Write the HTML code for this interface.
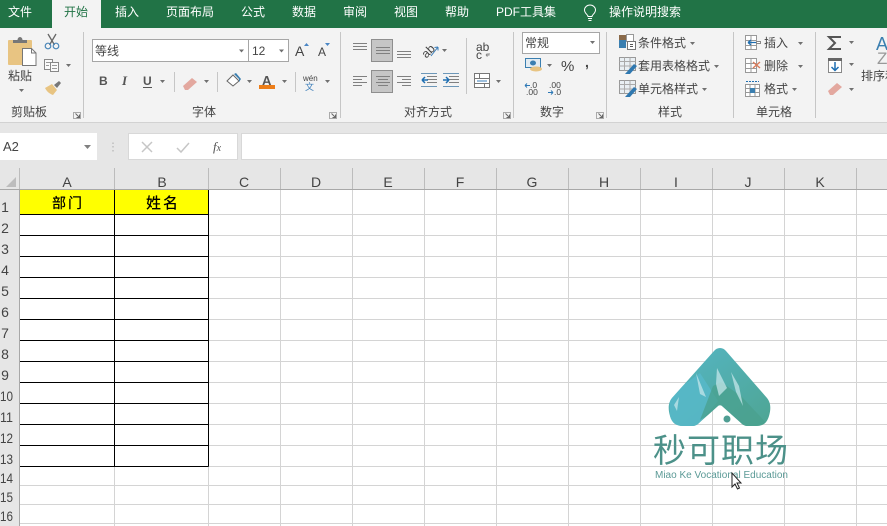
<!DOCTYPE html>
<html lang="zh"><head><meta charset="utf-8"><title>Excel</title>
<style>
html,body{margin:0;padding:0;background:#fff;width:887px;height:526px;overflow:hidden}
svg{display:block}
text{font-family:"Liberation Sans","Noto Sans CJK SC",sans-serif;fill:#444;font-size:12px}
.t{fill:#fff;font-size:12px}
.ch{fill:#444;font-size:14px;text-anchor:middle}
.rh{fill:#444;font-size:14px;text-anchor:middle}
.l{stroke:#808080;stroke-width:1;fill:none}
.a{fill:#707070}
</style></head><body>
<svg width="887" height="526" viewBox="0 0 887 526" xmlns="http://www.w3.org/2000/svg">
<rect width="887" height="526" fill="#fff"/>
<!-- tabs -->
<rect width="887" height="28" fill="#217346"/>
<rect x="52" y="0" width="49" height="28" fill="#f3f3f3"/>
<text class="t" x="8" y="16">文件</text>
<text x="64" y="16" style="fill:#217346">开始</text>
<text class="t" x="115" y="16">插入</text>
<text class="t" x="166" y="16">页面布局</text>
<text class="t" x="241" y="16">公式</text>
<text class="t" x="292" y="16">数据</text>
<text class="t" x="343" y="16">审阅</text>
<text class="t" x="394" y="16">视图</text>
<text class="t" x="445" y="16">帮助</text>
<text class="t" x="496" y="16">PDF工具集</text>
<path d="M588 16.500c0-2-3.500-3-3.500-6.500a5.500 5 0 0 1 11 0c0 3.500-3.500 4.500-3.500 6.500zM588 18.500h4M588.500 20.500h3" fill="none" stroke="#fff" stroke-width="1"/>
<text class="t" x="609" y="16">操作说明搜索</text>
<!-- ribbon -->
<rect y="28" width="887" height="94" fill="#f3f3f3"/>
<rect y="122" width="887" height="1" fill="#d2d2d2"/>
<g fill="#c6c6c6">
<rect x="83" y="32" width="1" height="86"/><rect x="340" y="32" width="1" height="86"/><rect x="513" y="32" width="1" height="86"/><rect x="606" y="32" width="1" height="86"/><rect x="733" y="32" width="1" height="86"/><rect x="815" y="32" width="1" height="86"/>
<rect x="174" y="72" width="1" height="20"/><rect x="217" y="72" width="1" height="20"/><rect x="295" y="72" width="1" height="20"/><rect x="466" y="38" width="1" height="56"/>
</g>
<!-- clipboard -->
<rect x="8" y="40" width="24" height="25" rx="1" fill="#e8c482"/>
<path d="M13 43v-3h4.500a2.500 3 0 0 1 5 0H27v3z" fill="#777"/>
<path d="M22.500 48.500h9l4.500 4.500v12.500H22.500z" fill="#fff" stroke="#777"/>
<path d="M31.500 48.500v4.500h4.500" fill="none" stroke="#777"/>
<text x="8" y="80">粘贴</text>
<path class="a" d="M19 89h5l-2.500 3z"/>
<path d="M48 34l6.500 11M56 34l-6.500 11" stroke="#666" stroke-width="1.300" fill="none"/>
<circle cx="48" cy="46" r="2.800" fill="none" stroke="#4a86b8" stroke-width="1.200"/><circle cx="56" cy="46" r="2.800" fill="none" stroke="#4a86b8" stroke-width="1.200"/>
<path d="M44.500 59.500h8v10h-8z" fill="#fafafa" stroke="#888"/><path d="M50.500 62.500h8v9h-8z" fill="#fafafa" stroke="#888"/>
<path d="M46 62.500h4M46 65.500h3M52 65.500h5M52 68.500h5" stroke="#999"/>
<path class="a" d="M66 64h5l-2.500 3z"/>
<path d="M45 88l7-4 5 6-4 5c-3-1-6-3-8-7z" fill="#e8c482"/><path d="M54 85l5-4 2 2-4 5z" fill="#777"/>
<text x="11" y="116">剪贴板</text>
<g id="launcher"><path d="M73.500 112.500h7v6h-7z" fill="none" stroke="#aaa"/><path d="M75.500 113.500l3.500 3.500M79.500 114.500v3h-3" fill="none" stroke="#666"/></g>
<!-- font -->
<rect x="92.500" y="39.500" width="156" height="22" fill="#fff" stroke="#a6a6a6"/>
<rect x="248.500" y="39.500" width="40" height="22" fill="#fff" stroke="#a6a6a6"/>
<text x="95" y="55">等线</text>
<path class="a" d="M239 49.500h5l-2.500 3zM279 49.500h5l-2.500 3z"/>
<text x="252" y="55">12</text>
<text x="295" y="56" style="font-size:14px">A</text><path d="M304 46l2.500-3 2.500 3z" fill="#4a86c5"/>
<text x="318" y="56" style="font-size:12px">A</text><path d="M325 43l2.500 3 2.500-3z" fill="#4a86c5"/>
<text x="99" y="85" style="font-weight:bold;font-size:12px;fill:#555">B</text>
<text x="122" y="85" style="font-family:'Liberation Serif',serif;font-style:italic;font-size:13px;font-weight:bold;fill:#555">I</text>
<text x="143" y="85" style="font-weight:bold;fill:#555">U</text><rect x="143" y="87" width="9" height="1" fill="#555"/>
<path class="a" d="M160 80h5l-2.500 3zM204 80h5l-2.500 3zM247 80h5l-2.500 3zM282 80h5l-2.500 3zM325 80h5l-2.500 3z"/>
<path d="M183 86l9-8 5 4-9 8h-3z" fill="#e3a89f"/>
<path d="M227 81l6-6 6 6-6 5z" fill="#fff" stroke="#666"/><path d="M234 74l5 5v3l2-3-5-6z" fill="#3b7fb0"/>
<text x="262" y="85" style="font-size:13px;font-weight:bold;fill:#555">A</text><rect x="259" y="85" width="16" height="4" fill="#ec7d18"/>
<text x="303" y="81" style="font-size:8px">wén</text><text x="305" y="90" style="font-size:9px;fill:#3a7cb8">文</text>
<text x="204" y="116" text-anchor="middle">字体</text>
<use href="#launcher" x="256"/>
<!-- alignment -->
<rect x="371.500" y="39.500" width="21" height="22" fill="#c6c6c6" stroke="#8e8e8e"/>
<rect x="371.500" y="70.500" width="21" height="22" fill="#c6c6c6" stroke="#8e8e8e"/>
<path class="l" d="M353 43.500h14M353 46.500h14M353 49.500h14M376 47.500h14M376 50.500h14M376 53.500h14M397 51.500h14M397 54.500h14M397 57.500h14"/>
<path class="l" d="M353 76.500h14M353 79.500h9M353 82.500h14M353 85.500h9M376 76.500h14M378 79.500h10M376 82.500h14M378 85.500h10M397 76.500h14M402 79.500h9M397 82.500h14M402 85.500h9"/>
<text x="421" y="56" transform="rotate(-45 427 51)" style="font-size:12px">ab</text>
<path d="M431 56l7-9M438 47l-3.500 .5M438 47l0 3.500" stroke="#3a7cb8" fill="none"/>
<path class="a" d="M442 49h5l-2.500 3z"/>
<path class="l" d="M427 76.500h10M427 79.500h10M427 82.500h10M443 76.500h0M449 76.500h10M449 79.500h10M449 82.500h10"/>
<path d="M421 73.500h16M421 86.500h16M443 73.500h16M443 86.500h16" stroke="#6d97b8" fill="none"/>
<path d="M428 80h-6m0 0l3-3m-3 3l3 3M443 80h6m0 0l-3-3m3 3l-3 3" stroke="#1f6fb2" stroke-width="1.500" fill="none"/>
<text x="476" y="51" style="font-size:12px">ab</text><text x="476" y="59" style="font-size:12px">c</text><path d="M489 53v2h-3m0 0l1.500-1.500m-1.500 1.500l1.500 1.500" stroke="#888" fill="none"/>
<path d="M474.500 73.500h15v14h-15zM474.500 78.500h15M474.500 83.500h15M479.500 73.500v5M484.500 83.500v4" fill="#fff" stroke="#777"/>
<path d="M477 81h10" stroke="#3a7cb8"/>
<path class="a" d="M496 80h5l-2.500 3z"/>
<text x="428" y="116" text-anchor="middle">对齐方式</text>
<use href="#launcher" x="430"/>
<!-- number -->
<rect x="522.500" y="32.500" width="77" height="21" fill="#fff" stroke="#a6a6a6"/>
<text x="525" y="47">常规</text>
<path class="a" d="M590 41h5l-2.500 3z"/>
<rect x="525.500" y="58.500" width="15" height="9" fill="#e3ecf2" stroke="#3b7fb0"/><ellipse cx="533" cy="63" rx="3" ry="2.500" fill="#3b7fb0"/><ellipse cx="536" cy="69" rx="6" ry="2.500" fill="#e8c482"/>
<path class="a" d="M547 64h5l-2.500 3z"/>
<text x="561" y="71" style="font-size:15px">%</text>
<text x="585" y="67" style="font-size:14px;font-weight:bold">,</text>
<text x="530" y="88" style="font-size:8.500px">.0</text><text x="526" y="95" style="font-size:8.500px">.00</text><path d="M530 85.500h-5m0 0l2-2m-2 2l2 2" stroke="#2d78b5" fill="none"/>
<text x="549" y="88" style="font-size:8.500px">.00</text><text x="554" y="95" style="font-size:8.500px">.0</text><path d="M548 92.500h5m0 0l-2-2m2 2l-2 2" stroke="#2d78b5" fill="none"/>
<text x="552" y="116" text-anchor="middle">数字</text>
<use href="#launcher" x="523"/>
<!-- styles -->
<rect x="619" y="35" width="7" height="5" fill="#8a6a4a"/><rect x="619" y="40" width="7" height="8" fill="#3b7fb0"/><rect x="626.500" y="34.500" width="7" height="7" fill="#fff" stroke="#999"/><rect x="627.500" y="41.500" width="8" height="8" fill="#fff" stroke="#777"/><path d="M630 44.500h3M630 46.500h3" stroke="#555"/>
<text x="638" y="47">条件格式</text><path class="a" d="M690 42h5l-2.500 3z"/>
<g id="tb"><rect x="619.500" y="57.500" width="16" height="13" fill="#e9eff3" stroke="#999"/><path d="M624.500 57.500v13M630 57.500v13M619.500 61.500h16M619.500 66h16" stroke="#aaa" fill="none"/><path d="M625 74l9-10 3 2-7 8z" fill="#2f78b0"/></g>
<text x="638" y="70">套用表格格式</text><path class="a" d="M714 65h5l-2.500 3z"/>
<use href="#tb" y="23"/>
<text x="638" y="93">单元格样式</text><path class="a" d="M702 88h5l-2.500 3z"/>
<text x="670" y="116" text-anchor="middle">样式</text>
<!-- cells -->
<path d="M745.500 35.500h11v14h-11zM745.500 40.500h11M745.500 45.500h11M751 35.500v14" fill="#fff" stroke="#999"/><path d="M757 42.500h-9m0 0l3-2.500m-3 2.500l3 2.500" stroke="#1f6fb2" stroke-width="1.300" fill="none"/><rect x="756.500" y="41.500" width="4" height="2" fill="#fff" stroke="#888"/>
<text x="764" y="47">插入</text><path class="a" d="M798 42h5l-2.500 3z"/>
<path d="M745.500 58.500h11v14h-11zM745.500 63.500h11M745.500 68.500h11M751 58.500v14" fill="#fff" stroke="#999"/><path d="M753 62l7 6M760 62l-7 6" stroke="#d87a5a" stroke-width="1.400"/>
<text x="764" y="70">删除</text><path class="a" d="M798 65h5l-2.500 3z"/>
<path d="M745.500 84.500h14v12h-14zM745.500 88.500h14M745.500 92.500h14M750 84.500v12M755 84.500v12" fill="#fff" stroke="#999"/><rect x="750" y="88" width="5" height="5" fill="#3b7fb0"/><path d="M746 81.500h13" stroke="#1f6fb2" stroke-dasharray="2 1"/>
<text x="764" y="93">格式</text><path class="a" d="M792 88h5l-2.500 3z"/>
<text x="774" y="116" text-anchor="middle">单元格</text>
<!-- editing -->
<path d="M841 37h-12l6 6-6 6h12" fill="none" stroke="#555" stroke-width="2"/>
<path class="a" d="M849 41h5l-2.500 3z"/>
<rect x="828.500" y="58.500" width="13" height="14" fill="#fff" stroke="#888"/><rect x="828" y="58" width="14" height="3" fill="#666"/><path d="M835 62v8M831.500 67l3.500 3.500 3.500-3.500" stroke="#1f6fb2" stroke-width="1.500" fill="none"/>
<path class="a" d="M849 63h5l-2.500 3z"/>
<path d="M828 91l9-8 5 4-9 8h-3z" fill="#e3a89f"/>
<path class="a" d="M849 88h5l-2.500 3z"/>
<text x="876" y="50" style="font-size:18px;fill:#3b7fb0">A</text>
<text x="877" y="64" style="font-size:17px;fill:#999">Z</text>
<text x="861" y="80">排序和</text>
<!-- formula bar -->
<rect y="123" width="887" height="66" fill="#e6e6e6"/>
<rect x="0" y="133" width="97" height="27" fill="#fff"/>
<text x="3" y="151" style="font-size:13px">A2</text>
<path d="M84 145h7l-3.500 4z" fill="#808080"/>
<path d="M113 142.500v1.500M113 146v1.500M113 150v1.500" stroke="#aaa"/>
<rect x="128.500" y="133.500" width="109" height="26" fill="#fff" stroke="#d8d8d8"/>
<path d="M142 142l10 10M152 142l-10 10" stroke="#c6c6c6" stroke-width="1.500"/>
<path d="M177 148l4 4 8-9" stroke="#c6c6c6" stroke-width="1.500" fill="none"/>
<text x="213" y="151" style="font-family:'Liberation Serif',serif;font-style:italic;font-size:13px;fill:#555">f<tspan font-size="10">x</tspan></text>
<rect x="241.500" y="133.500" width="650" height="26" fill="#fff" stroke="#d8d8d8"/>
<!-- column headers -->
<path d="M16 177v10H6z" fill="#bdbdbd"/>
<g fill="#bcbcbc"><rect x="19" y="168" width="1" height="21"/><rect x="114" y="168" width="1" height="21"/><rect x="208" y="168" width="1" height="21"/><rect x="280" y="168" width="1" height="21"/><rect x="352" y="168" width="1" height="21"/><rect x="424" y="168" width="1" height="21"/><rect x="496" y="168" width="1" height="21"/><rect x="568" y="168" width="1" height="21"/><rect x="640" y="168" width="1" height="21"/><rect x="712" y="168" width="1" height="21"/><rect x="784" y="168" width="1" height="21"/><rect x="856" y="168" width="1" height="21"/></g>
<rect y="189" width="887" height="1" fill="#a8a8a8"/>
<text class="ch" x="67" y="187">A</text><text class="ch" x="162" y="187">B</text><text class="ch" x="244" y="187">C</text><text class="ch" x="316" y="187">D</text><text class="ch" x="388" y="187">E</text><text class="ch" x="460" y="187">F</text><text class="ch" x="532" y="187">G</text><text class="ch" x="604" y="187">H</text><text class="ch" x="676" y="187">I</text><text class="ch" x="748" y="187">J</text><text class="ch" x="820" y="187">K</text>
<!-- row header -->
<rect x="0" y="190" width="20" height="336" fill="#e6e6e6"/>
<rect x="19" y="190" width="1" height="336" fill="#a8a8a8"/>
<text class="rh" x="5" y="212">1</text><text class="rh" x="5" y="233">2</text><text class="rh" x="5" y="254">3</text><text class="rh" x="5" y="275">4</text><text class="rh" x="5" y="296">5</text><text class="rh" x="5" y="317">6</text><text class="rh" x="5" y="338">7</text><text class="rh" x="5" y="359">8</text><text class="rh" x="5" y="380">9</text>
<text class="rh" x="6.500" y="401" textLength="13" lengthAdjust="spacingAndGlyphs">10</text><text class="rh" x="6.500" y="422" textLength="13" lengthAdjust="spacingAndGlyphs">11</text><text class="rh" x="6.500" y="443" textLength="13" lengthAdjust="spacingAndGlyphs">12</text><text class="rh" x="6.500" y="464" textLength="13" lengthAdjust="spacingAndGlyphs">13</text><text class="rh" x="6.500" y="483" textLength="13" lengthAdjust="spacingAndGlyphs">14</text><text class="rh" x="6.500" y="502" textLength="13" lengthAdjust="spacingAndGlyphs">15</text><text class="rh" x="6.500" y="521" textLength="13" lengthAdjust="spacingAndGlyphs">16</text>
<!-- grid -->
<path stroke="#d4d4d4" fill="none" d="M20 214.500H887M20 235.500H887M20 256.500H887M20 277.500H887M20 298.500H887M20 319.500H887M20 340.500H887M20 361.500H887M20 382.500H887M20 403.500H887M20 424.500H887M20 445.500H887M20 466.500H887M20 485.500H887M20 504.500H887M20 523.500H887M114.500 190V526M208.500 190V526M280.500 190V526M352.500 190V526M424.500 190V526M496.500 190V526M568.500 190V526M640.500 190V526M712.500 190V526M784.500 190V526M856.500 190V526"/>
<rect x="20" y="190" width="189" height="24" fill="#ffff00"/>
<path stroke="#000" fill="none" d="M20 214.500H208.500M20 235.500H208.500M20 256.500H208.500M20 277.500H208.500M20 298.500H208.500M20 319.500H208.500M20 340.500H208.500M20 361.500H208.500M20 382.500H208.500M20 403.500H208.500M20 424.500H208.500M20 445.500H208.500M20 466.500H208.500M114.500 190V466.500M208.500 190V466.500"/>
<text x="68" y="208" text-anchor="middle" style="fill:#000;font-size:14px;font-weight:500;letter-spacing:2px">部门</text>
<text x="163" y="208" text-anchor="middle" style="fill:#000;font-size:15px;font-weight:500;letter-spacing:2px">姓名</text>
<!-- logo -->
<defs>
<linearGradient id="lg" x1="0" y1="0" x2="1" y2="1"><stop offset="0" stop-color="#55b6c6"/><stop offset="1" stop-color="#4ea593"/></linearGradient>
<clipPath id="lc"><path id="ls" d="M714 351c3-4 9-4 12 0l41 47c4 5 4 11 2 18-2 7-6 10-13 10h-8c-3 0-5-1-7-3l-19-17c-1-1-3-1-4 0l-19 17c-2 2-4 3-7 3h-9c-7 0-11-3-13-10-2-7-2-13 2-18z"/></clipPath>
</defs>
<path d="M714 351c3-4 9-4 12 0l41 47c4 5 4 11 2 18-2 7-6 10-13 10h-8c-3 0-5-1-7-3l-19-17c-1-1-3-1-4 0l-19 17c-2 2-4 3-7 3h-9c-7 0-11-3-13-10-2-7-2-13 2-18z" fill="url(#lg)"/>
<g clip-path="url(#lc)">
<path d="M670 395l30-22 18 28-22 26h-26z" fill="#58b9cb" opacity=".8"/>
<path d="M700 420l13-34 8-4 20 14 30 32h-31l-20-20z" fill="#49a08e" opacity=".75"/>
<path d="M696 373l10 24-6-3zM717 368l10 20-8 8-3-12zM731 372l8 14 4 20-7-14zM674 405l5-8-2 14z" fill="#c4e6ea" opacity=".75"/>
</g>
<circle cx="727" cy="419" r="3.500" fill="#4f9e93"/>
<text x="721" y="462" text-anchor="middle" style="fill:#4c9189;font-size:33px;letter-spacing:1px">秒可职场</text>
<text x="721.500" y="478" text-anchor="middle" style="fill:#5b9a96;font-size:10px" textLength="133" lengthAdjust="spacingAndGlyphs">Miao Ke Vocational Education</text>
<!-- cursor -->
<path d="M732 473v14l3-3 2.500 5 2-1-2.500-5h4z" fill="#fff" stroke="#222" stroke-width="1"/>
</svg>
</body></html>
